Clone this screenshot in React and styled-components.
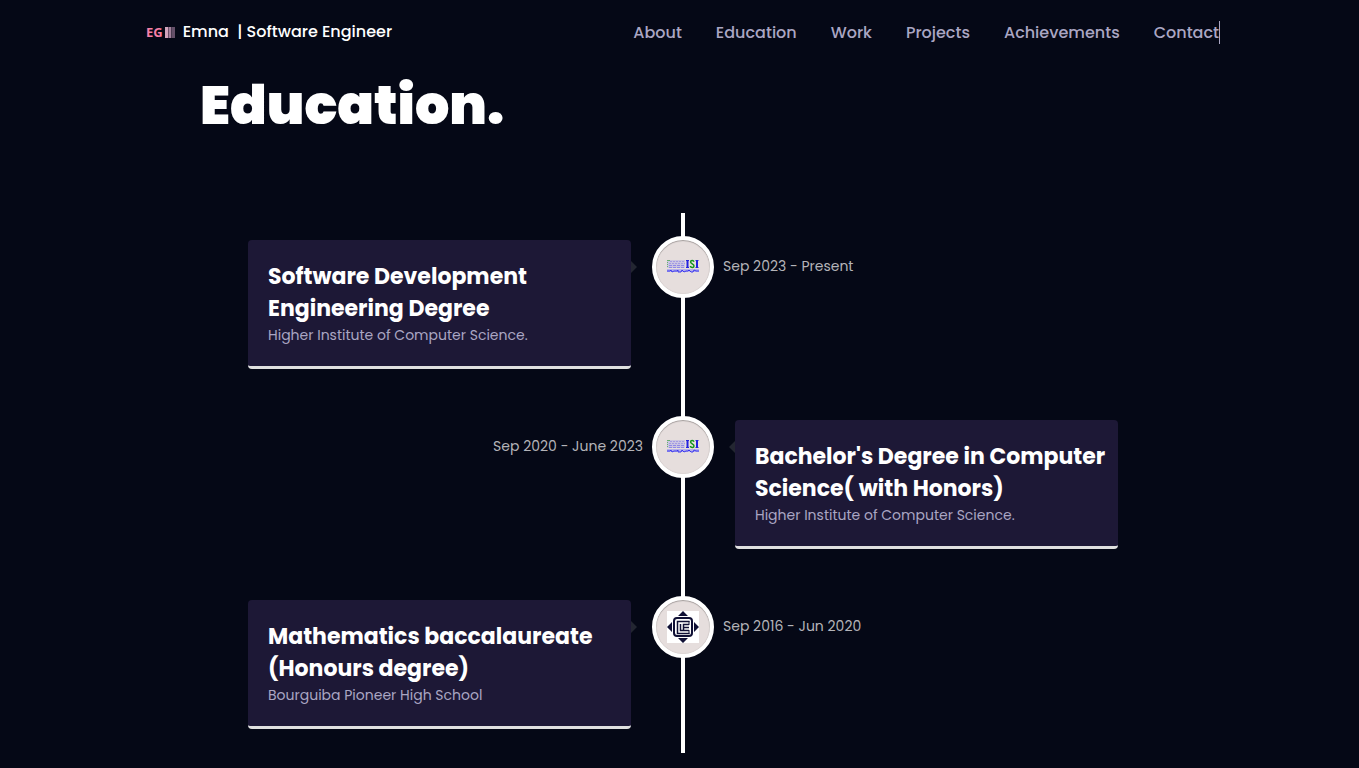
import React from "react";
import styled, { createGlobalStyle } from "styled-components";

const GlobalStyle = createGlobalStyle`
  *, *::before, *::after { box-sizing: border-box; }
  body {
    margin: 0;
    background: #050816;
    color: #fff;
    font-family: Poppins, Inter, "Open Sans", sans-serif;
  }
  h1, h2, h3, p, ul, ol { margin: 0; padding: 0; }
  ul, ol { list-style: none; }
`;

const Page = styled.div`
  min-height: 100vh;
  padding: 0 16px 15px 23px;
  background: #050816;
`;

const Header = styled.header`
  display: flex;
  align-items: center;
  justify-content: space-between;
  max-width: 1074px;
  height: 64px;
  margin: 0 auto;
`;

const Brand = styled.a`
  display: flex;
  align-items: center;
  gap: 8px;
  color: #fff;
  font-size: 16px;
  font-weight: 500;
  line-height: 24px;
  white-space: pre;
  text-decoration: none;
`;

const Monogram = styled.span`
  display: flex;
  align-items: center;
  gap: 2px;
  color: #f77fa6;
  font-family: "Noto Sans", sans-serif;
  font-size: 13px;
  font-weight: 700;
  line-height: 16px;
`;

const NavList = styled.ul`
  display: flex;
  gap: 34px;
  border-right: 1px solid #aaa6c3;
`;

const NavLink = styled.a`
  display: block;
  color: #aaa6c3;
  font-size: 16px;
  font-weight: 500;
  line-height: 23px;
  text-decoration: none;
`;

const Main = styled.main`
  max-width: 966px;
  margin: 0 auto;
`;

const Heading = styled.h2`
  padding-top: 3px;
  font-size: 54px;
  font-weight: 900;
  line-height: 76px;
`;

const Timeline = styled.ol`
  display: grid;
  gap: 51px;
  max-width: 870px;
  margin: 70px auto 0;
  padding: 27px 0 24px;
  background: linear-gradient(#fff, #fff) center / 4px 100% no-repeat;
`;

const Entry = styled.li`
  display: grid;
  grid-template-columns: 44fr 104px 44fr;
  align-items: start;
`;

const Card = styled.article`
  position: relative;
  grid-row: 1;
  grid-column: ${(p) => (p.$right ? 3 : 1)};
  padding: 21px 8px 21px 20px;
  border-bottom: 3px solid #e0e0e0;
  border-radius: 4px;
  background: #1d1836;

  &::before {
    content: "";
    position: absolute;
    top: 21px;
    ${(p) => (p.$right ? "right" : "left")}: 100%;
    border: 6px solid transparent;
    border-${(p) => (p.$right ? "left" : "right")}-width: 0;
    border-${(p) => (p.$right ? "right" : "left")}-color: #232631;
  }
`;

const CardTitle = styled.h3`
  font-size: 22px;
  font-weight: 700;
  line-height: 32px;
`;

const School = styled.p`
  color: #aaa6c3;
  font-size: 14px;
  line-height: 20px;
`;

const Badge = styled.div`
  display: grid;
  place-items: center;
  grid-row: 1;
  grid-column: 2;
  justify-self: center;
  width: 62px;
  height: 62px;
  margin-top: -4px;
  border: 4px solid #fff;
  border-radius: 50%;
  background: #e6dedd;
  box-shadow: inset 0 1px 1px #a39d9c, inset 0 0 1px #a39d9c;
`;

const Period = styled.time`
  grid-row: 1;
  grid-column: ${(p) => (p.$right ? 1 : 3)};
  justify-self: ${(p) => (p.$right ? "end" : "start")};
  margin: 15px -12px 0;
  color: #b4b4b9;
  font-size: 14px;
  line-height: 22px;
`;

function LogoBars() {
  return (
    <svg width="10" height="11" viewBox="0 0 10 11" aria-hidden="true">
      <rect width="3" height="11" fill="#d2a5bd" />
      <rect x="3" width="1" height="11" fill="#6b4f68" />
      <rect x="4" width="2" height="11" fill="#a3829c" />
      <rect x="6" width="1" height="11" fill="#4a3a50" />
      <rect x="7" width="3" height="11" fill="#655069" />
    </svg>
  );
}

function IsiLogo() {
  return (
    <svg width="32" height="32" viewBox="0 0 32 32" role="img" aria-label="ISI">
      <rect y="9" width="18" height="8" fill="#cbc5e2" />
      <rect y="18" width="32" height="3" fill="#b5b0ec" />
      <g fill="none" strokeWidth="1">
        <path d="M3 10.5H18M2 12.5H18" stroke="#a39ce4" strokeDasharray="2 1" />
        <path d="M2 14.5H18M2 16.5H18" stroke="#8f8ae6" strokeDasharray="3 1" />
        <path d="M0 9.5H3M0 11.5H1M0 13.5H1M0 15.5H1" stroke="#69b06e" />
        <path d="M0 20H3L4 19L5 21L7 20H10L11 19V21H14L15 19L17 21L19 20H21L22 19L24 21H26L27 19L29 20H32" stroke="#3a36ee" />
      </g>
      <path d="M19 9h3v1h-.5v6h.5v1h-3v-1h.5v-6H19zM28.500 9h3v1H31v6h.5v1h-3v-1h.5v-6h-.5z" fill="#2523df" />
      <path d="M27 10.800C26.500 9 23.600 9 23.600 11C23.600 13 27 12.800 27 15C27 17 23.800 17 23.300 15" fill="none" stroke="#16951f" strokeWidth="1.500" />
    </svg>
  );
}

function PioneerLogo() {
  return (
    <svg width="32" height="32" viewBox="0 0 32 32" role="img" aria-label="Bourguiba Pioneer High School">
      <rect width="32" height="32" fill="#fff" />
      <path d="M16 0l5 5H11zM16 32l5-5H11zM0 16l5-5v10zM32 16l-5-5v10z" fill="#101035" />
      <rect x="7" y="7" width="18" height="18" rx="3" fill="#fff" stroke="#101035" strokeWidth="2" />
      <path d="M22.500 10.500H10.500V22.500H22.500M22 13.500H16.500V16.500H22M13.500 13V19.500H22M16.500 16V19" fill="none" stroke="#101035" strokeWidth="1.500" />
      <path d="M22 10v4M22 19v4" stroke="#101035" strokeWidth="1" />
    </svg>
  );
}

const links = ["About", "Education", "Work", "Projects", "Achievements", "Contact"];

const entries = [
  { title: "Software Development Engineering Degree", school: "Higher Institute of Computer Science.", period: "Sep 2023 - Present", Logo: IsiLogo },
  { title: "Bachelor's Degree in Computer Science( with Honors)", school: "Higher Institute of Computer Science.", period: "Sep 2020 - June 2023", Logo: IsiLogo },
  { title: "Mathematics baccalaureate (Honours degree)", school: "Bourguiba Pioneer High School", period: "Sep 2016 - Jun 2020", Logo: PioneerLogo },
];

export default function App() {
  return (
    <Page>
      <GlobalStyle />
      <Header>
        <Brand href="#home">
          <Monogram>EG<LogoBars /></Monogram>
          <span>{"Emna  | Software Engineer"}</span>
        </Brand>
        <nav aria-label="Main">
          <NavList>
            {links.map((link) => (
              <li key={link}><NavLink href={`#${link.toLowerCase()}`}>{link}</NavLink></li>
            ))}
          </NavList>
        </nav>
      </Header>
      <Main>
        <Heading>Education.</Heading>
        <Timeline>
          {entries.map(({ title, school, period, Logo }, i) => {
            const right = i % 2 === 1;
            return (
              <Entry key={title}>
                <Card $right={right}>
                  <CardTitle>{title}</CardTitle>
                  <School>{school}</School>
                </Card>
                <Badge><Logo /></Badge>
                <Period $right={right}>{period}</Period>
              </Entry>
            );
          })}
        </Timeline>
      </Main>
    </Page>
  );
}
